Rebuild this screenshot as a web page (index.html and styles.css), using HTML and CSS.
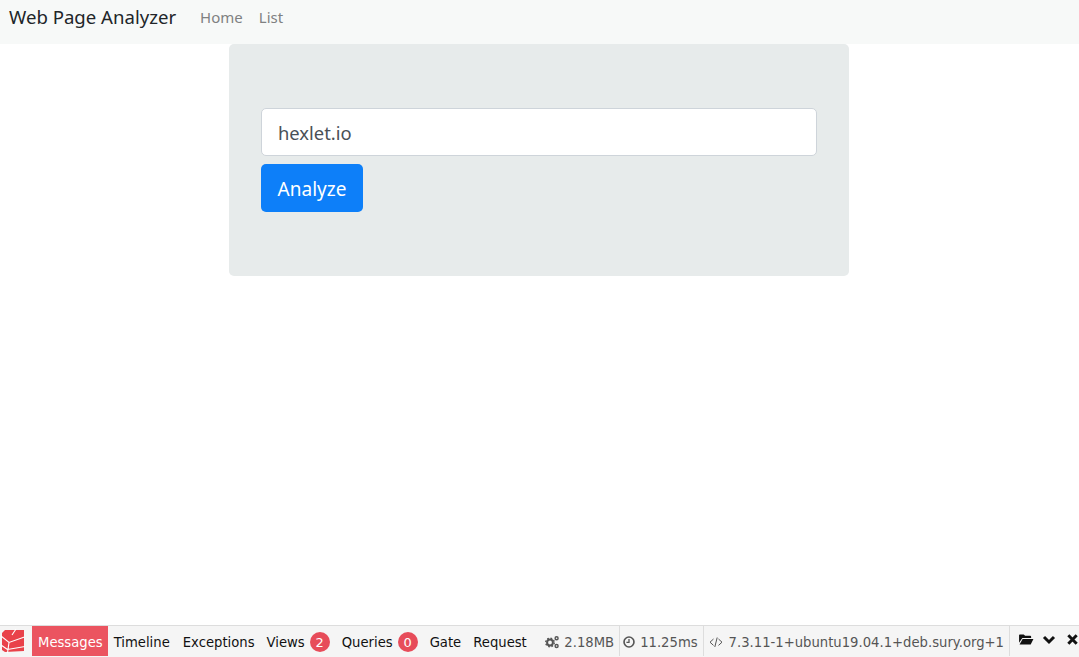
FILE: index.html
```html
<!DOCTYPE html>
<html lang="en">
<head>
<meta charset="utf-8">
<title>Web Page Analyzer</title>
<link rel="stylesheet" href="styles.css">
</head>
<body>
<nav class="navbar">
  <a class="brand" href="#">Web Page Analyzer</a>
  <ul class="nav">
    <li><a href="#">Home</a></li>
    <li><a href="#">List</a></li>
  </ul>
</nav>
<main class="container">
  <form class="jumbotron">
    <input class="field" type="text" value="hexlet.io">
    <button class="btn" type="button">Analyze</button>
  </form>
</main>
<footer class="debugbar">
  <a class="logo" href="#" aria-label="Laravel">
    <svg viewBox="0 0 24 24" width="24" height="24">
      <path d="M4 1 23 1v21l-19 1-3-2V4z" fill="#e9424a"/>
      <path d="M0 7 8 13.500 23.500 8M8 13.500 6.500 24M15 0 11 6M0 16l6.500 4.500M6.500 20.500l17.500-3" fill="none" stroke="#fff" stroke-width="1.100"/>
    </svg>
  </a>
  <a class="tab active" href="#">Messages</a>
  <a class="tab wide" href="#">Timeline</a>
  <a class="tab" href="#">Exceptions</a>
  <a class="tab" href="#">Views <span class="badge">2</span></a>
  <a class="tab" href="#">Queries <span class="badge">0</span></a>
  <a class="tab" href="#">Gate</a>
  <a class="tab" href="#">Request</a>
  <div class="right">
    <span class="stat plain">
      <svg class="ico" viewBox="0 0 14 14" width="14" height="14"><circle cx="5" cy="7.500" r="2.900" fill="none" stroke="#555" stroke-width="2"/><circle cx="5" cy="7.500" r="4.300" fill="none" stroke="#555" stroke-width="1.400" stroke-dasharray="1.700 1.680"/><circle cx="11.600" cy="3.200" r="1.500" fill="none" stroke="#555" stroke-width="1.400"/><circle cx="11.600" cy="11" r="1.500" fill="none" stroke="#555" stroke-width="1.400"/></svg>
      2.18MB
    </span>
    <span class="stat clock">
      <svg class="ico" viewBox="0 0 14 14" width="12" height="12"><circle cx="7" cy="7" r="5.800" fill="none" stroke="#555" stroke-width="1.900"/><path d="M7 3.500V7.500H4" fill="none" stroke="#555" stroke-width="1.500"/></svg>
      11.25ms
    </span>
    <span class="stat version">
      <svg class="ico" viewBox="0 0 14 14" width="14" height="14"><path d="M4.500 4 1 7.200l3.500 3.200M9.500 4 13 7.200l-3.500 3.200M8.200 2.500l-2.400 9.500" fill="none" stroke="#555" stroke-width="1"/></svg>
      7.3.11-1+ubuntu19.04.1+deb.sury.org+1
    </span>
    <div class="controls">
      <svg viewBox="0 0 16 14" width="15" height="13"><path d="M0 2.500C0 2 .4 1.500 1 1.500h4l1.500 1.500H12c.6 0 1 .4 1 1V5.500H3.500L0 10.500z" fill="#111"/><path d="M3.800 6.500H15.500L12.500 12.500H0.500z" fill="#111"/></svg>
      <svg viewBox="0 0 14 14" width="14" height="14"><path d="M2 4 7 9l5-5" fill="none" stroke="#111" stroke-width="3"/></svg>
      <svg class="close" viewBox="0 0 14 14" width="13" height="13"><path d="M2.500 2.500l9 9M11.500 2.500l-9 9" fill="none" stroke="#111" stroke-width="3.200"/></svg>
    </div>
  </div>
</footer>
</body>
</html>
```
FILE: styles.css
```css
* { box-sizing: border-box; }
html, body { height: 100%; }
body {
  margin: 0;
  background: #fff;
  color: #212529;
  font-family: "Noto Sans", "Open Sans", sans-serif;
  font-size: 16px;
  display: flex;
  flex-direction: column;
  height: 657px;
  overflow: hidden;
}
a { text-decoration: none; color: inherit; }
.navbar {
  height: 44px;
  background: #f7f9f8;
  display: flex;
  align-items: center;
  padding: 0 9px 11px;
  flex: none;
}
.brand { font-size: 18.600px; color: #212529; margin-right: 24px; }
.nav { list-style: none; display: flex; gap: 16px; margin: 0; padding: 0; font-size: 15px; color: #7f8182; }
.container { flex: 1; display: flex; justify-content: center; align-items: flex-start; padding-right: 1px; }
.jumbotron {
  width: 620px;
  height: 232px;
  background: #e7ebeb;
  border-radius: 5px;
  padding: 64px 32px;
  display: flex;
  flex-direction: column;
  align-items: flex-start;
  gap: 8px;
}
.field {
  width: 100%;
  height: 48px;
  border: 1px solid #ced4da;
  border-radius: 5px;
  padding: 0 16px;
  font: 18.400px "Noto Sans", "Open Sans", sans-serif;
  color: #495057;
  background: #fff;
}
.btn {
  width: 102px;
  height: 48px;
  padding: 2px 0 0;
  border: 0;
  border-radius: 5px;
  background: #0d7ff9;
  color: #fff;
  font: 19px "Noto Sans", "Open Sans", sans-serif;
}
.debugbar {
  flex: none;
  height: 32px;
  display: flex;
  align-items: stretch;
  background: #f5f5f5;
  border-top: 1px solid #ddd;
  padding-bottom: 1px;
  font-family: "DejaVu Sans", sans-serif;
  font-size: 13.2px;
  color: #111;
  white-space: nowrap;
}
.logo { width: 32px; display: flex; align-items: center; padding-left: 1px; }
.tab { display: flex; align-items: center; padding: 2px 6px 0; gap: 5px; }
.tab.active { background: #eb5460; color: #fff; padding-right: 5px; }
.tab.wide { padding-right: 7px; }
.badge {
  width: 20px; height: 20px; border-radius: 50%;
  background: #e74c5a; color: #fff;
  display: flex; align-items: center; justify-content: center;
  font-size: 13px;
}
.right { margin-left: auto; display: flex; align-items: stretch; color: #555; }
.stat { display: flex; align-items: center; gap: 5px; padding: 2px 5px 0; border-left: 1px solid #ddd; }
.stat.plain { border-left: 0; }
.stat.clock { padding-left: 3px; }
.stat.version { gap: 6px; }
.controls { display: flex; align-items: center; gap: 8px; padding: 0 0 0 9px; border-left: 1px solid #ddd; width: 70px; flex: none; }
.controls svg { margin-top: -3px; flex: none; }
.controls .close { margin-left: 2px; }
```
